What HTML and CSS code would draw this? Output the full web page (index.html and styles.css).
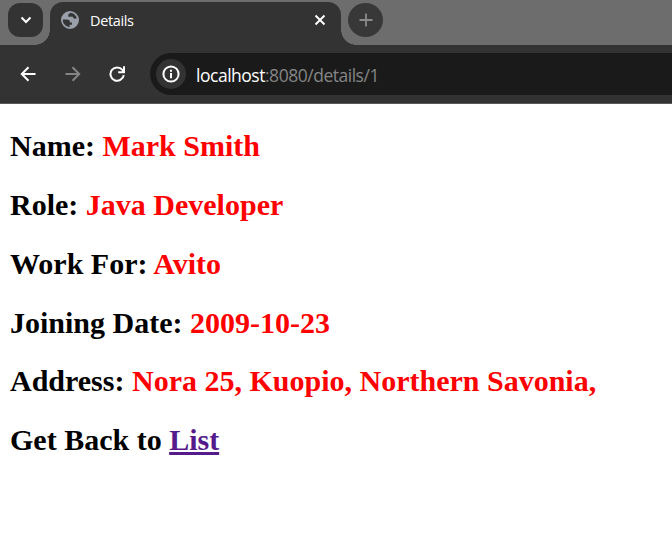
FILE: index.html
```html
<!DOCTYPE html>
<html lang="en">
<head>
<meta charset="utf-8">
<title>Details</title>
<link rel="stylesheet" href="styles.css">
</head>
<body>
<header class="browser">
  <div class="tabstrip">
    <button class="tab-search" aria-label="Search tabs">
      <svg width="12" height="8" viewBox="0 0 12 8"><path d="M1.5 1.5 6 6l4.500-4.500" fill="none" stroke="#fff" stroke-width="2"/></svg>
    </button>
    <div class="tab">
      <svg class="globe" width="18" height="18" viewBox="0 0 18 18">
        <circle cx="9" cy="9" r="8.100" fill="#343536" stroke="#9aa0aa" stroke-width="1.800"/>
        <path d="M9.300 1.200C5.200.8 1.300 4.500 1.200 8.500h4.500c2.200 0 3.400 1.200 3.400 2.900H11v2.400H8.600v2.900c4.600.4 8.300-3.200 8.300-7.700l-.4-2.300c-1 .8-2.300 1.200-3.500.8-.8-.3-1.100-1-1.100-1.800H7.300V3.900c0-1 .9-1.500 2-1.700z" fill="#9aa0aa"/>
      </svg>
      <span class="tab-title">Details</span>
      <svg class="close" width="12" height="12" viewBox="0 0 12 12"><path d="m1.500 1.500 9 9m0-9-9 9" fill="none" stroke="#fff" stroke-width="1.900"/></svg>
    </div>
    <button class="new-tab" aria-label="New tab">
      <svg width="14" height="14" viewBox="0 0 14 14"><path d="M7 .5v13M.5 7h13" fill="none" stroke="#8b8b8b" stroke-width="1.800"/></svg>
    </button>
  </div>
  <div class="toolbar">
    <svg class="nav" width="16" height="16" viewBox="0 0 16 16"><path d="M15.500 8H2M8.500 1.300 1.800 8l6.700 6.700" fill="none" stroke="#fff" stroke-width="2"/></svg>
    <svg class="nav" width="16" height="16" viewBox="0 0 16 16"><path d="M.5 8H14M7.500 1.300 14.200 8l-6.700 6.700" fill="none" stroke="#858585" stroke-width="2"/></svg>
    <svg class="nav" width="16" height="16" viewBox="0 0 16 16"><path d="M14.800 9.200A6.700 6.700 0 1 1 13.500 4l1 1.500M15 .3v5.900H9.200" fill="none" stroke="#fff" stroke-width="2"/></svg>
    <div class="omnibox">
      <span class="site-info">
        <svg width="18" height="18" viewBox="0 0 18 18"><circle cx="9" cy="9" r="7.600" fill="none" stroke="#fff" stroke-width="2"/><path d="M9 7.900v5.300M9 4.700v2" stroke="#fff" stroke-width="2"/></svg>
      </span>
      <span class="url"><span class="host">localhost</span>:8080/details/1</span>
    </div>
  </div>
</header>
<main class="page">
  <h2>Name: <span class="value">Mark Smith</span></h2>
  <h2>Role: <span class="value">Java Developer</span></h2>
  <h2>Work For: <span class="value">Avito</span></h2>
  <h2>Joining Date: <span class="value">2009-10-23</span></h2>
  <h2>Address: <span class="value">Nora 25, Kuopio, Northern Savonia,</span></h2>
  <h2>Get Back to <a href="#">List</a></h2>
</main>
</body>
</html>
```
FILE: styles.css
```css
* { box-sizing: border-box; }
html, body { height: 100%; }
body { margin: 0; background: #fff; overflow: hidden; }
svg { display: block; flex: none; }
button { border: 0; padding: 0; display: flex; align-items: center; justify-content: center; flex: none; }
.browser { height: 104px; background: #333; border-bottom: 1px solid #5c5858; font-family: "Open Sans", "Segoe UI", sans-serif; }
.tabstrip { height: 45px; display: flex; align-items: flex-start; background: #6d6d6d; padding-left: 8px; }
.tab-search { width: 35px; height: 34px; margin-top: 3px; border-radius: 12px; background: #333; }
.tab { position: relative; width: 291px; height: 43px; margin: 2px 0 0 7px; padding: 0 15px 7px 11px; display: flex; align-items: center; background: #333; border-radius: 13px 13px 0 0; }
.tab::before, .tab::after { content: ""; position: absolute; bottom: 0; width: 15px; height: 15px; }
.tab::before { right: 100%; background: radial-gradient(circle at 0 0, transparent 14.500px, #333 15px); }
.tab::after { left: 100%; background: radial-gradient(circle at 100% 0, transparent 14.500px, #333 15px); }
.tab-title { margin-left: 11px; padding-top: 2px; color: #fff; font-size: 14.500px; line-height: 20px; letter-spacing: -0.350px; }
.close { margin-left: auto; }
.new-tab { width: 35px; height: 34px; margin: 3px 0 0 7px; border-radius: 50%; background: #383838; }
.toolbar { height: 58px; display: flex; align-items: center; padding-left: 20px; }
.nav { margin-right: 28.500px; }
.omnibox { flex: 1; height: 42px; margin-left: -3.500px; padding-left: 6px; display: flex; align-items: center; background: #1a1a1a; border-radius: 21px 0 0 21px; }
.site-info { width: 30px; height: 30px; display: flex; align-items: center; justify-content: center; border-radius: 50%; background: #333; }
.url { margin-left: 10px; padding-top: 2px; color: #858585; font-size: 17.500px; line-height: 24px; letter-spacing: -0.480px; white-space: nowrap; }
.host { color: #fff; }
.page { padding: 0.400px 10px; font-family: "Liberation Serif", "Times New Roman", serif; }
h2 { margin: 24.800px 0; font-size: 30px; line-height: 34px; font-weight: 700; white-space: nowrap; }
.value { color: red; }
a { color: #551a8b; text-decoration-thickness: 3px; }
```
